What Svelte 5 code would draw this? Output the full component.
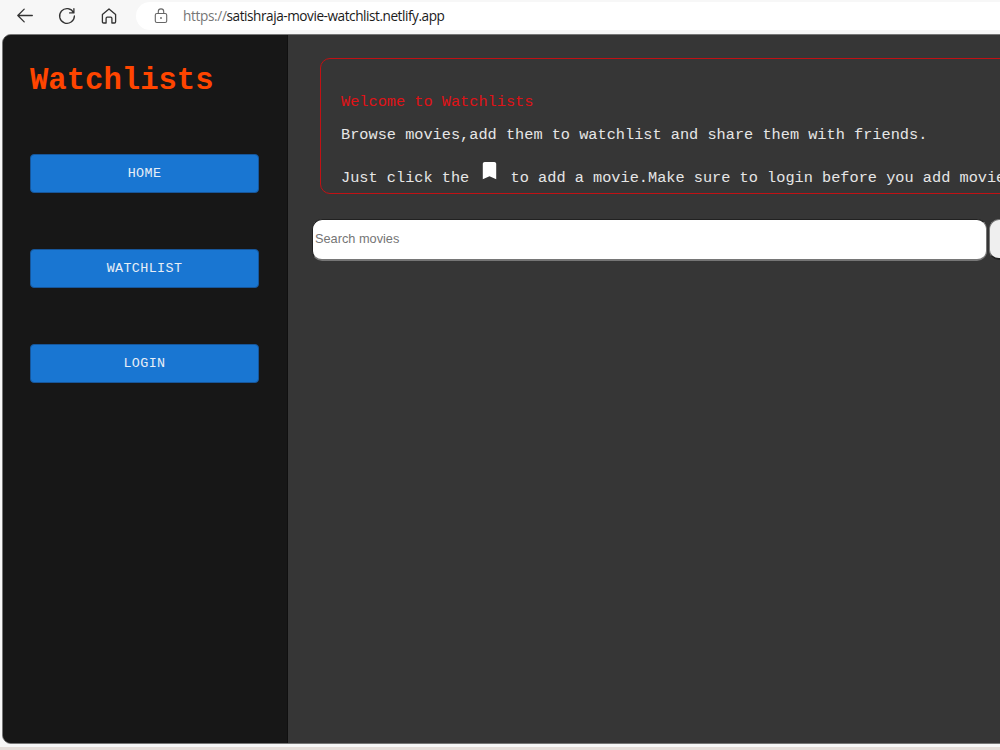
<script>
	const links = ["Home", "Watchlist", "Login"];
	let query = $state("");
</script>

<div class="browser">
	<header class="toolbar">
		<svg class="tool" viewBox="0 0 18 18">
			<path d="M16.3 8.5H1.8M8.2 2.1 1.8 8.5l6.4 6.4" />
		</svg>
		<svg class="tool" viewBox="0 0 18 18">
			<path d="M15.6 5.6A7.4 7.4 0 1 0 16.4 9M15.9 1.7v4.2h-4.3" />
		</svg>
		<svg class="tool" viewBox="0 0 18 18">
			<path d="M2.4 7.6 9 1.9l6.6 5.7v7.2q0 1.2-1.2 1.2h-2.5v-4.6q0-1.2-1.2-1.2H7.3q-1.2 0-1.2 1.2V16H3.6q-1.2 0-1.2-1.2z" />
		</svg>
		<div class="address">
			<svg class="lock" viewBox="0 0 16 16">
				<rect x="2.3" y="5.5" width="11.4" height="9" rx="1.6" />
				<path d="M5.3 5.5V3.6a2.7 2.7 0 0 1 5.4 0v1.9" />
				<circle cx="8" cy="10" r="0.9" />
			</svg>
			<span class="scheme">https://</span><span class="host">satishraja-movie-watchlist.netlify.app</span>
		</div>
	</header>

	<div class="page">
		<nav class="sidebar">
			<h1>Watchlists</h1>
			{#each links as link}
				<button class="link">{link}</button>
			{/each}
		</nav>

		<main>
			<section class="welcome">
				<p class="heading">Welcome to Watchlists</p>
				<p>Browse movies,add them to watchlist and share them with friends.</p>
				<p class="hint">
					Just click the <svg class="bookmark" viewBox="0 0 24 24"><path d="M17 3H7c-1.1 0-2 .9-2 2v16l7-3 7 3V5c0-1.1-.9-2-2-2z" /></svg> to add a movie.Make sure to login before you add movies.
				</p>
			</section>
			<div class="search">
				<input placeholder="Search movies" bind:value={query} />
				<button class="submit" aria-label="Search"></button>
			</div>
		</main>
	</div>
</div>

<style>
	:global(body) {
		background-color: #f7f7f7;
		overflow: hidden;
	}

	.browser {
		box-sizing: border-box;
		width: 1000px;
		height: 750px;
		overflow: hidden;
		display: flex;
		flex-direction: column;
		border-bottom: 3px solid #e5deda;
	}

	.toolbar {
		height: 34px;
		flex: none;
		display: flex;
		align-items: flex-start;
		box-sizing: border-box;
		padding-left: 16px;
	}

	.tool {
		width: 18px;
		height: 18px;
		margin: 7px 24px 0 0;
		fill: none;
		stroke: #333;
		stroke-width: 1.3;
		stroke-linecap: round;
		stroke-linejoin: round;
	}

	.address {
		box-sizing: border-box;
		flex: 1;
		height: 28px;
		margin: 2px -20px 0 -6px;
		padding: 0 0 2px 17px;
		display: flex;
		align-items: center;
		background-color: white;
		border-radius: 14px;
		font: 13.6px "Open Sans", sans-serif;
		white-space: nowrap;
	}

	.lock {
		width: 16px;
		height: 16px;
		margin: 2px 14px 0 0;
		fill: none;
		stroke: #666;
		stroke-width: 1.1;
	}

	.lock circle {
		fill: #666;
		stroke: none;
	}

	.scheme {
		color: #767676;
		letter-spacing: -0.35px;
	}

	.host {
		color: #1b1b1b;
		letter-spacing: -0.45px;
	}

	.page {
		width: 1020px;
		height: 708px;
		margin-left: 2px;
		display: flex;
		border: 1px solid #777;
		border-radius: 9px;
		overflow: hidden;
		background-color: #363636;
		font-family: "Liberation Mono", "Courier New", monospace;
	}

	.sidebar {
		box-sizing: border-box;
		width: 285px;
		flex: none;
		padding: 0 29px 0 27px;
		background-color: #171717;
		border-right: 1px solid #101010;
	}

	h1 {
		margin: 29px 0 55px;
		font-size: 30.6px;
		line-height: 35px;
		color: #ff4500;
	}

	.link {
		display: block;
		width: 229px;
		height: 39px;
		margin-bottom: 56px;
		padding: 0 0 1px;
		background-color: #1976d2;
		border: 1px solid #17569a;
		border-radius: 4px;
		color: #e7eef6;
		font-family: inherit;
		font-size: 13.4px;
		letter-spacing: 0.38px;
		text-transform: uppercase;
	}

	main {
		flex: 1;
		min-width: 0;
		padding: 23px 0 0 24px;
	}

	.welcome {
		box-sizing: border-box;
		width: 800px;
		height: 136px;
		margin-left: 8px;
		padding: 34px 0 0 20px;
		border: 1px solid #c11114;
		border-radius: 10px;
		color: #e6e6e6;
		font-size: 15.28px;
		line-height: 18px;
		white-space: nowrap;
	}

	.welcome p {
		margin: 0 0 15px;
	}

	.welcome .heading {
		color: #e01216;
	}

	.welcome .hint {
		margin-top: 15px;
	}

	.bookmark {
		width: 23px;
		height: 23px;
		vertical-align: 0;
		fill: white;
	}

	.search {
		display: flex;
		gap: 2px;
		margin-top: 25px;
	}

	input {
		box-sizing: border-box;
		width: 675px;
		height: 42px;
		flex: none;
		padding: 0 1px 3px;
		background-color: white;
		border: 1px inset #767676;
		border-bottom-width: 2px;
		border-radius: 10px;
		font: 12.75px "Liberation Sans", Arial, sans-serif;
		text-indent: 1px;
	}

	input::placeholder {
		color: #757575;
	}

	.submit {
		box-sizing: border-box;
		width: 60px;
		height: 41px;
		flex: none;
		background-color: #efefef;
		border: 1px outset #767676;
		border-bottom-width: 2px;
		border-radius: 10px;
	}
</style>
